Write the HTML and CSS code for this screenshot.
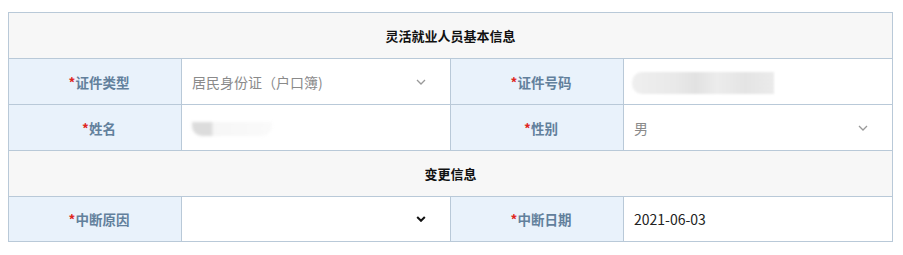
FILE: index.html
```html
<!DOCTYPE html>
<html lang="zh-CN">
<head>
<meta charset="utf-8">
<link rel="stylesheet" href="styles.css">
</head>
<body>
<div class="wrap">
<table class="form">
  <colgroup>
    <col class="c-label"><col class="c-value"><col class="c-label"><col class="c-value">
  </colgroup>
  <tr><th colspan="4" class="title">灵活就业人员基本信息</th></tr>
  <tr>
    <td class="label"><span class="req">*</span>证件类型</td>
    <td class="value muted">
      <div class="select"><span>居民身份证（户口簿)</span>
        <svg class="chev light" viewBox="0 0 10 6" width="10" height="6"><path d="M1 1l4 4 4-4" fill="none" stroke="#999" stroke-width="1.3"/></svg>
      </div>
    </td>
    <td class="label"><span class="req">*</span>证件号码</td>
    <td class="value"><div class="blur-id"></div></td>
  </tr>
  <tr>
    <td class="label"><span class="req">*</span>姓名</td>
    <td class="value"><div class="blur-name"></div></td>
    <td class="label"><span class="req">*</span>性别</td>
    <td class="value muted">
      <div class="select"><span>男</span>
        <svg class="chev light" viewBox="0 0 10 6" width="10" height="6"><path d="M1 1l4 4 4-4" fill="none" stroke="#999" stroke-width="1.3"/></svg>
      </div>
    </td>
  </tr>
  <tr><th colspan="4" class="title">变更信息</th></tr>
  <tr>
    <td class="label"><span class="req">*</span>中断原因</td>
    <td class="value">
      <div class="select"><span></span>
        <svg class="chev" viewBox="0 0 10 6" width="10" height="6"><path d="M1.2 1l3.8 3.8 3.8-3.8" fill="none" stroke="#111" stroke-width="2"/></svg>
      </div>
    </td>
    <td class="label"><span class="req">*</span>中断日期</td>
    <td class="value dark">2021-06-03</td>
  </tr>
</table>
</div>
</body>
</html>
```

FILE: styles.css
```css
html, body {
  margin: 0;
  padding: 0;
  background: #ffffff;
}
.wrap {
  padding: 12px 0 0 8px;
}
.form {
  border-collapse: collapse;
  width: 885px;
  table-layout: fixed;
  font-family: "Noto Sans CJK SC", "Noto Sans", sans-serif;
}
.c-label { width: 173px; }
.c-value { width: 269px; }
.form th, .form td {
  border: 1px solid #b9c9d8;
  height: 46px;
  padding: 0;
  box-sizing: border-box;
}
.form tr:last-child td { height: 45px; }
.title {
  background: #f7f7f7;
  color: #111;
  font-size: 13px;
  font-weight: bold;
  text-align: center;
}
.form td.label {
  background: #e9f2fb;
  color: #62809c;
  font-size: 13.5px;
  font-weight: bold;
  text-align: center;
  padding-left: 8px;
}
.req {
  color: #e0261d;
  font-weight: bold;
}
.form td.value {
  background: #fff;
  font-size: 14px;
  padding: 0 10px;
}
.muted { color: #8a8a8a; }
.dark { color: #222; }
.select {
  display: flex;
  align-items: center;
  justify-content: space-between;
  padding-right: 14px;
}
.chev { display: block; }
.blur-id {
  width: 142px;
  height: 22px;
  margin-left: -2px;
  margin-top: 2px;
  border-radius: 10px 0 0 10px;
  background: linear-gradient(90deg, #efefef 0%, #e9e9e9 30%, #e2e2e2 45%, #ececec 60%, #e4e4e4 80%, #ebebeb 100%);
  filter: blur(1px);
}
.blur-name {
  width: 80px;
  height: 14px;
  border-radius: 0 0 10px 10px;
  background: linear-gradient(90deg, #dcdcdc 0%, #dcdcdc 25%, #f6f6f6 26%, #fafafa 100%);
  filter: blur(1.5px);
  margin-top: 2px;
}
```
